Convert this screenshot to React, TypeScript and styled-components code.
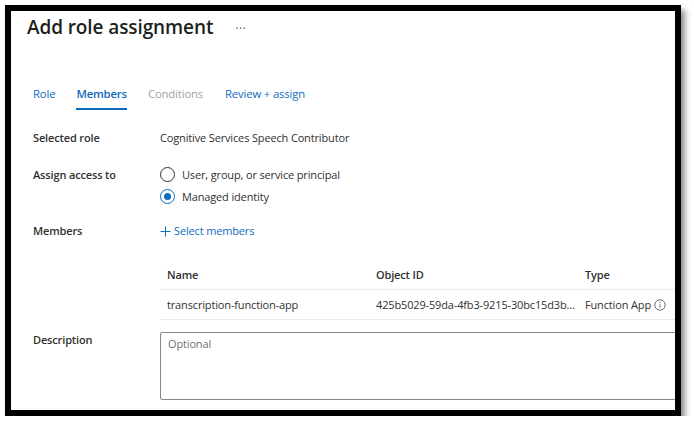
import React from "react";
import styled, { createGlobalStyle } from "styled-components";

const Global = createGlobalStyle`
  html, body { margin: 0; padding: 0; background: #ffffff; }
  body { font-family: "Open Sans", "Noto Sans", sans-serif; color: #323130; }
  * { box-sizing: border-box; }
`;

const Frame = styled.div`
  margin: 5px 0 0 5px;
  width: 676px;
  height: 411px;
  border: 6px solid #000;
  background: #fff;
  box-shadow: 4px 5px 6px rgba(0, 0, 0, 0.45);
  overflow: hidden;
`;

const Page = styled.div`
  padding: 3px 0 0 22px;
  display: flex;
  flex-direction: column;
  font-size: 11px;
  letter-spacing: -0.15px;
`;

const TitleRow = styled.div`
  display: flex;
  align-items: center;
  gap: 22px;
  margin-left: -6px;
  height: 26px;
`;

const Title = styled.h1`
  margin: 0;
  font-size: 19px;
  line-height: 26px;
  font-weight: 600;
  color: #201f1e;
  letter-spacing: -0.1px;
`;

const More = styled.span`
  font-size: 12px;
  color: #605e5c;
  letter-spacing: 0.5px;
  padding-top: 2px;
`;

const Tabs = styled.nav`
  display: flex;
  gap: 21px;
  margin-top: 44px;
`;

const Tab = styled.div<{ $active?: boolean; $disabled?: boolean }>`
  font-size: 11.3px;
  line-height: 20px;
  padding-bottom: 4px;
  font-weight: ${(p) => (p.$active ? 600 : 400)};
  color: ${(p) => (p.$disabled ? "#a19f9d" : "#0f6cbd")};
  border-bottom: 2px solid ${(p) => (p.$active ? "#0f6cbd" : "transparent")};
  &:last-child {
    margin-left: 1px;
  }
`;

const Field = styled.div<{ $top: number }>`
  display: flex;
  align-items: flex-start;
  margin-top: ${(p) => p.$top}px;
`;

const Label = styled.div<{ $lh?: number }>`
  width: 127px;
  flex: none;
  font-weight: 600;
  line-height: ${(p) => p.$lh ?? 20}px;
  color: #323130;
`;

const Value = styled.div`
  line-height: 20px;
  color: #323130;
`;

const RadioGroup = styled.div`
  display: flex;
  flex-direction: column;
  margin-top: -2px;
  margin-bottom: 1px;
`;

const RadioOption = styled.label`
  display: flex;
  align-items: center;
  gap: 7px;
  height: 22px;
  color: #323130;
`;

const RadioCircle = styled.span<{ $checked?: boolean }>`
  width: 15px;
  height: 15px;
  border-radius: 50%;
  border: 1px solid ${(p) => (p.$checked ? "#0f6cbd" : "#323130")};
  display: flex;
  align-items: center;
  justify-content: center;
  flex: none;
  &::after {
    content: "";
    width: 7px;
    height: 7px;
    border-radius: 50%;
    background: ${(p) => (p.$checked ? "#0f6cbd" : "transparent")};
  }
`;

const AddLink = styled.div`
  display: flex;
  align-items: center;
  gap: 3px;
  line-height: 20px;
  color: #0f6cbd;
`;

const Table = styled.div`
  margin: 19px 0 0 127px;
  width: 560px;
  flex: none;
  display: flex;
  flex-direction: column;
`;

const Row = styled.div<{ $head?: boolean }>`
  display: grid;
  grid-template-columns: 209px 209px 1fr;
  height: 30px;
  align-items: center;
  border-bottom: 1px solid #edebe9;
  font-weight: ${(p) => (p.$head ? 600 : 400)};
  color: #323130;
`;

const Cell = styled.div`
  padding-left: 7px;
  white-space: nowrap;
  display: flex;
  align-items: center;
  gap: 3px;
`;

const TextArea = styled.div`
  width: 560px;
  height: 68px;
  flex: none;
  border: 1px solid #8a8886;
  border-radius: 2px;
  padding: 3px 7px;
  line-height: 16px;
  color: #707070;
`;

const InfoIcon = () => (
  <svg width="12" height="12" viewBox="0 0 12 12" aria-hidden>
    <circle cx="6" cy="6" r="5.2" fill="none" stroke="#605e5c" strokeWidth="0.9" />
    <line x1="6" y1="5.2" x2="6" y2="8.6" stroke="#605e5c" strokeWidth="0.9" />
    <circle cx="6" cy="3.6" r="0.6" fill="#605e5c" />
  </svg>
);

const PlusIcon = () => (
  <svg width="11" height="11" viewBox="0 0 11 11" aria-hidden>
    <line x1="5.5" y1="0.5" x2="5.5" y2="10.5" stroke="#0f6cbd" strokeWidth="1" />
    <line x1="0.5" y1="5.5" x2="10.5" y2="5.5" stroke="#0f6cbd" strokeWidth="1" />
  </svg>
);

export default function App() {
  return (
    <>
      <Global />
      <Frame>
        <Page>
          <TitleRow>
            <Title>Add role assignment</Title>
            <More>···</More>
          </TitleRow>
          <Tabs>
            <Tab>Role</Tab>
            <Tab $active>Members</Tab>
            <Tab $disabled>Conditions</Tab>
            <Tab>Review + assign</Tab>
          </Tabs>
          <Field $top={18}>
            <Label>Selected role</Label>
            <Value>Cognitive Services Speech Contributor</Value>
          </Field>
          <Field $top={17}>
            <Label>Assign access to</Label>
            <RadioGroup>
              <RadioOption>
                <RadioCircle />
                User, group, or service principal
              </RadioOption>
              <RadioOption>
                <RadioCircle $checked />
                Managed identity
              </RadioOption>
            </RadioGroup>
          </Field>
          <Field $top={13}>
            <Label>Members</Label>
            <AddLink>
              <PlusIcon />
              Select members
            </AddLink>
          </Field>
          <Table>
            <Row $head>
              <Cell>Name</Cell>
              <Cell>Object ID</Cell>
              <Cell>Type</Cell>
            </Row>
            <Row>
              <Cell>transcription-function-app</Cell>
              <Cell>425b5029-59da-4fb3-9215-30bc15d3b...</Cell>
              <Cell>
                Function App <InfoIcon />
              </Cell>
            </Row>
          </Table>
          <Field $top={12}>
            <Label $lh={16}>Description</Label>
            <TextArea>Optional</TextArea>
          </Field>
        </Page>
      </Frame>
    </>
  );
}
